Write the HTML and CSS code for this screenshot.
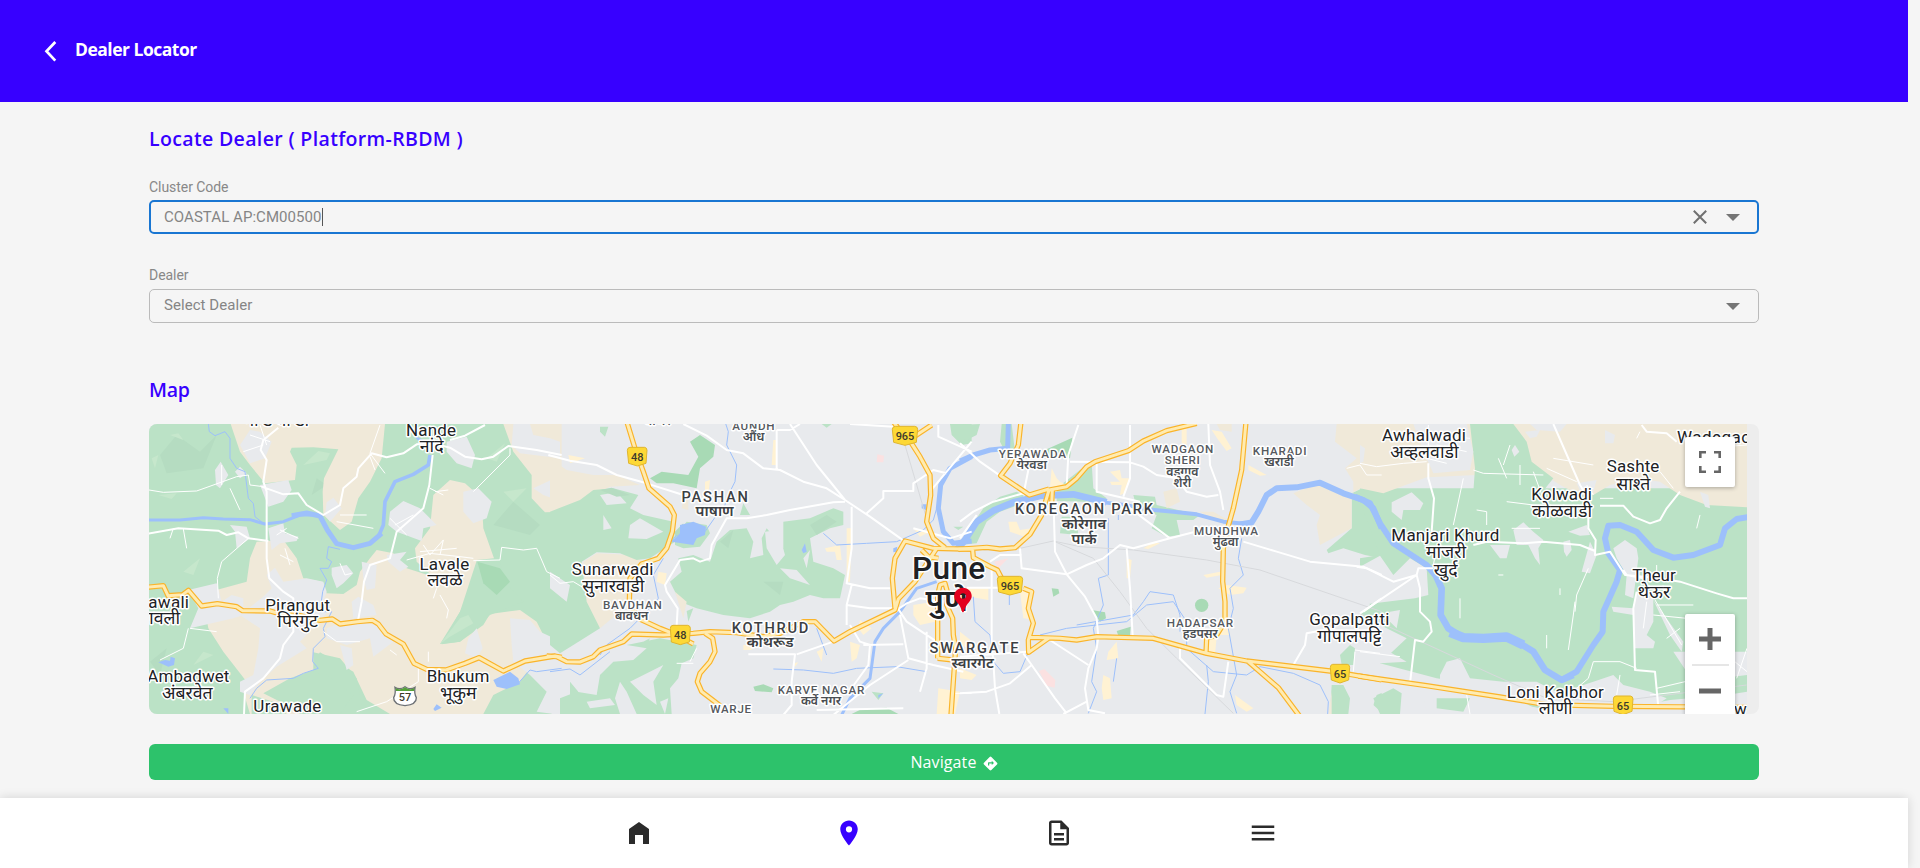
FILE: index.html
```html
<!DOCTYPE html>
<html lang="en">
<head>
<meta charset="utf-8">
<title>Dealer Locator</title>
<link rel="stylesheet" href="styles.css">
</head>
<body>
<div class="shell">
  <header class="topbar">
    <svg class="back" viewBox="0 0 12 21"><path d="M10.8 1 2 10.3 10.8 19.6"/></svg>
    <h1 class="topbar-title">Dealer Locator</h1>
  </header>

  <main class="content">
    <h2 class="heading heading-locate">Locate Dealer ( Platform-RBDM )</h2>

    <div class="field">
      <label class="label">Cluster Code</label>
      <div class="select focused">
        <span class="value">COASTAL AP:CM00500</span><span class="caret"></span>
        <svg class="clear" viewBox="0 0 14 14"><path d="M.8.8 13.2 13.2M13.2.8.8 13.2"/></svg>
        <svg class="arrow" viewBox="0 0 14 7"><path d="M0 0h14L7 7z"/></svg>
      </div>
    </div>
    <div class="field">
      <label class="label">Dealer</label>
      <div class="select">
        <span class="value">Select Dealer</span>
        <svg class="arrow" viewBox="0 0 14 7"><path d="M0 0h14L7 7z"/></svg>
      </div>
    </div>

    <h2 class="heading heading-map">Map</h2>

    <div class="map">
      <svg class="map-canvas" viewBox="149 424 1598 290">
        <defs>
          <g id="highways">
            <g transform="translate(140 415) scale(.33333)">
              <path d="M20 517 70 512 84 542 128 539 145 526 185 573 232 566 290 575 308 587 390 588 425 598 480 602 540 616 577 612 600 627 652 620 697 616 715 627 738 657 790 687 822 745 860 763 918 765 975 745 1017 728 1090 768 1155 738 1245 723 1265 727"/>
            </g>
            <g transform="translate(550 415) scale(.33333)">
              <path d="M-10 723 20 725 50 740 90 741 130 725 150 705 220 680 245 657 340 660 430 655 480 650 560 653 640 665 690 655 760 620 795 620 852 678 900 650 1035 585 1045 552 1095 500 1160 400"/>
              <path d="M232 25 258 110 280 170 297 220 360 275 373 300 367 350 350 400 325 430 275 447 240 490 238 560 265 610 330 640 380 660 430 687M465 655 488 670 495 710 480 740 450 775 442 800 455 830 510 872"/>
              <path d="M1035 580 1027 490 1035 430 1065 378 1150 400 1270 403M1030 20 1045 40M1075 70 1110 125 1140 180 1142 240 1130 320 1150 370 1185 398M1115 405 1135 425 1165 430M1145 30 1085 70M1163 730V540L1170 510 1185 505 1192 530 1190 570 1208 610 1210 660 1217 700 1203 900M1163 730 1210 735"/>
            </g>
            <g transform="translate(960 415) scale(.33333)">
              <path d="M-5 403 80 397 120 402 165 398 210 358 245 300 267 225 320 215 350 190 380 155 405 140 505 107 550 78 620 47 710 25M183 20 175 90 150 145 122 182 208 240 267 222M277 225 275 268M858 20 845 165 820 280 800 350 790 400 788 500 795 560 795 620 770 660 740 670 738 715M38 405 40 428 90 455 112 465 125 490M190 520 215 530 205 580 220 625 205 675 206 712 268 668M210 667 300 670 350 675 410 665 580 670 740 715 860 738 1110 768 1265 795M865 740 955 818 1020 905"/>
            </g>
            <g transform="translate(1360 415) scale(.33333)">
              <path d="M-5 783 200 812 420 846 560 869 760 874 1170 877"/>
            </g>
          </g>
        </defs>

        <rect class="urban" x="149" y="424" width="1598" height="290"/>

        <!-- western hills -->
        <g transform="translate(140 415) scale(.33333)">
          <path class="park" d="M27 27H1235V897H27z"/>
          <path class="hill-dark" d="M60 120 110 60 180 110 230 60 190 160 80 175zM1060 330 1120 260 1200 330 1170 360zM560 210 530 190 515 240zM30 740 80 700 60 780z"/>
          <path class="hill-light" d="M35 130 55 120 45 160zM90 60 130 75 115 55zM55 240 110 235 95 252zM130 470 180 430 160 480zM160 750 190 710 220 720zM490 150 535 108 570 115 560 135zM1040 130 1095 85 1070 140zM1090 230 1160 220 1120 260z"/>
          <path class="sand" d="M272 27H735L725 130 690 200 655 250 635 320 600 345 550 300 548 230 552 190 595 103 520 97 455 98 450 110 470 150 465 195 415 200 375 205 330 150 300 110zM1090 27H1265V290L1215 292 1175 250V180L1120 110z"/>
          <path class="sand" d="M350 380 430 375 470 430 490 490 545 500 560 535 610 537 650 510 660 470 690 430 710 405 760 415 800 460 880 485 830 440 825 400 870 340 880 240 930 195 975 205 1025 250 1030 340 1062 430 1010 435 1015 480 960 590 905 688 960 680 1030 630 1050 597 1140 585 1190 620 1215 670 1265 690V745L1165 765 1140 800 1060 840 1030 897H750L680 855 640 770 540 712 520 740 535 760 450 790 370 835 440 870 480 897H330L310 830 320 800 250 710 205 640 190 560 210 530 320 500 330 430z"/>
          <path class="park" d="M1010 437H1080L1095 500 1150 560 1050 600 960 680 900 687 960 590zM520 712 600 730 650 790 665 870 700 897H600L640 840 560 780 520 775z"/>
          <path class="forest" d="M1012 440 1080 460 1110 500 1070 540 1030 505z"/>
          <path class="hill-light" d="M900 687 960 610 985 600 1000 625 930 665z"/>
          <path class="park" d="M335 840 400 860 440 897H335z"/>
          <path class="urban" d="M300 90 330 45 360 50 395 80 375 130 330 145zM225 165 242 140 265 180 240 220 228 210zM285 170 300 155 320 175 300 190zM360 210 445 195 455 225 430 260 385 275zM560 262 580 248 605 280 570 320 555 300zM750 290 790 258 840 280 890 330 850 340 845 378 770 350 745 330zM920 80 980 65 1005 120 995 160 950 145 920 110zM970 230 1015 220 1055 260 1040 310 1000 325 970 290zM1120 27H1170L1180 60 1230 70 1260 80V130L1140 115 1115 90zM1180 220 1265 180V260L1210 240zM270 330 320 335 330 370 290 400 285 350zM385 340 430 325 435 355 475 365 470 378 420 385 395 405zM740 420 800 410 780 435 805 455 780 470 745 440zM665 440 710 450 705 520 680 525 670 490zM575 458 620 450 640 475 610 505 590 520 575 480zM380 480 405 458 430 500 500 490 550 500 560 530 545 570 560 595 480 680 500 700 410 755 360 800 330 840 300 830 300 800 340 780 355 700 360 640 300 600 370 545 395 520zM145 525 230 505 245 560 275 540 310 550 310 600 280 610 150 640 175 580zM560 640 640 610 730 640 760 680 700 725 690 670 620 690 560 670zM600 690 635 700 640 750 620 765zM635 560 655 545 700 570 710 600 640 610zM1110 610 1170 615 1200 650 1265 680V900L1190 890 1220 830 1170 780 1120 740 1115 690zM985 670 1010 640 1028 700 1010 730 975 715z"/>
        </g>
        <!-- Pashan and Kothrud -->
        <g transform="translate(550 415) scale(.33333)">
          <path class="sand" d="M0 130 50 165 130 180 200 180 270 210 180 215 90 260 40 290 0 290zM100 440 140 415 250 420 280 440 230 480 235 570 150 640 110 580z"/>
          <path class="park" d="M0 290 90 255 130 225 190 220 265 240 240 280 280 300 370 320 375 380 300 430 260 435 210 415 140 412 95 440 110 560 150 640 70 690 30 715 0 690z"/>
          <path class="urban" d="M150 240 200 232 230 265 170 270zM240 330 270 310 340 350 290 372 235 370zM160 300 185 340 160 345zM0 470 60 510 50 560 0 520z"/>
          <path class="park" d="M360 500 395 470 385 430 430 420 480 440 500 380 540 345 590 340 610 380 600 430 640 420 635 370 650 340 700 400 700 320 780 310 850 280 880 290 880 330 840 340 780 370 790 440 850 460 885 480 870 550 820 550 780 540 730 560 690 570 660 590 600 610 520 600 440 580 390 560zM375 360 410 320 470 330 480 355 450 395 400 400 375 390zM570 300 580 265 600 300zM1200 27H1265V85L1235 90 1205 60zM150 35 175 35 165 65 150 50zM1210 335H1240L1225 345zM410 588 430 580 415 620zM965 830 1000 835 985 855zM815 27H845L830 38z"/>
          <path class="forest" d="M300 190 335 170 415 180 445 125 420 80 450 60 495 90 490 125 450 160 440 220 370 205 320 205zM610 815 640 808 670 820 665 832 615 828zM905 897 935 882 1010 878 1045 897z"/>
          <path class="urban" d="M645 350 685 345 705 420 680 450 650 400zM760 430 780 405 770 460zM690 460 740 465 780 510 720 490z"/>
          <path class="park" d="M230 690 330 670 440 690 430 730 395 745 385 790 360 820 365 897H260L230 830 210 800 195 850 210 897H30L30 850 80 830 140 840 150 780 190 740 250 735 290 700zM260 690 300 670 290 690zM60 800 85 830 60 850z"/>
          <path class="urban" d="M240 800 340 750 310 800 320 870 280 840zM330 860 355 850 345 897zM110 860 180 850 195 870 120 880z"/>
          <path class="hill-dark" d="M510 380 550 345 535 400zM780 330 830 300 860 320 800 360zM640 500 700 500 690 540zM150 225 185 218 240 240 200 245zM370 355 400 325 390 370z"/>
          <path class="sand" d="M375 530 410 560 400 610zM400 250 415 250 415 285 395 280z"/>
          <path class="block" d="M325 470 350 475 345 510 320 500zM465 200 480 195 475 240 465 235zM825 400 870 390 875 435 860 435 855 410 830 410zM890 340 905 340 900 500 890 500zM930 615 965 640 940 660 925 640zM900 680 930 690 920 730 905 740zM1090 570 1150 560 1155 620 1110 630 1090 600zM1165 820 1230 830 1215 897H1160zM800 710 820 700 815 740zM670 75H680V150H665zM1090 340 1140 350 1110 365zM730 745 745 742 735 755zM580 690H605V705H580zM55 120 105 130 60 145z"/>
          <path class="hospital" d="M982 118 1002 122 1000 142 980 142z"/>
        </g>
        <!-- Koregaon Park to Hadapsar -->
        <g transform="translate(960 415) scale(.33333)">
          <path class="park" d="M0 30 60 27 50 60 20 75 0 70zM125 27H155L165 110 140 120 120 80zM30 340 70 280 120 245 170 230 190 240 190 265 120 290 80 320 50 385 0 390zM290 220 360 165 395 145 400 220 440 250 420 262 290 258zM305 305 350 305 355 360 300 355zM520 240 585 245 590 270 720 300 700 315 650 315 660 360 620 365 575 340 590 300 530 280zM1175 235 1210 218 1240 225 1265 250V430L1215 420 1150 400 1105 415 1100 405 1175 340zM1115 810 1150 810 1170 850 1165 897H1110zM1240 840 1265 830V890L1240 880zM1140 720 1170 690 1185 700 1180 750 1145 750z"/>
          <path class="forest" d="M255 105 337 68 330 130 270 125zM275 520 295 522 298 535 280 545zM395 585 435 592 438 610 420 620zM470 648 512 635 510 662 475 662z"/>
          <circle class="forest" cx="725" cy="571" r="20"/>
          <path class="sand" d="M1130 27H1265V225L1205 218 1175 235V340L1080 390 1070 330 1080 300 1040 270 1000 235 1075 205 1180 245 1180 200 1155 160 1190 130 1125 80zM610 230 650 220 660 260 620 280zM720 290 760 290 810 318 780 325zM770 27H815V50L780 45zM1115 830 1105 897 1115 897z"/>
          <path class="block" d="M275 160 290 190 300 200 320 210 270 215zM145 320 170 320 180 345 215 340 205 370 150 350zM450 170 480 165 485 190 510 190 495 235 480 240 485 210 455 210 450 200 480 200zM665 40 680 40 680 90 665 85zM755 45 785 50 815 100 800 108 775 75zM865 150 920 180 900 182 865 165zM20 520H85V555L30 545zM180 530 210 520 208 612 190 610zM730 480 780 470 785 480 740 488zM775 520 800 510 860 518 850 535 810 540zM550 400 580 382 600 385 565 402zM445 710 470 680 475 730 440 735zM0 650 50 690 40 705 0 690zM0 760 50 780 35 795 0 790zM430 780 450 790 455 850 430 855 425 820zM825 840 880 880 860 890 830 870zM500 430 515 435 510 490 500 490zM770 620H810V660H770zM730 670 770 665 765 720 735 715z"/>
          <path class="hospital" d="M102 440 145 430 115 460zM237 768 253 762 286 795 284 818 260 812z"/>
        </g>
        <!-- eastern farmland -->
        <g transform="translate(1360 415) scale(.33333)">
          <path class="park" d="M0 220H1161V830L1100 840 930 855 880 865 620 870 540 890 420 820 230 790 60 745 140 670 0 600 30 570 0 500 0 430 60 420 0 260z"/>
          <path class="sand" d="M0 27H330L345 90 350 180 200 187 70 235 0 220zM460 27H1161V277L1040 270 960 240 900 200 830 190 750 210 700 240 660 240 600 210 540 170 510 140 500 90z"/>
          <path class="park" d="M330 27H460L500 80 515 140 580 190 540 240 340 230 345 160z"/>
          <path class="urban" d="M160 27H320L340 110 330 165 220 175 195 120zM0 455 60 422 100 480 150 430 200 460 205 540 165 550 0 570zM0 90 15 100 10 140 0 145zM495 50 540 45 530 65 510 70zM510 27H620L600 50 530 45zM455 105 465 90 478 110 463 125zM735 45 765 60 760 85 735 85zM95 262 155 232 190 265 180 285 130 285 125 315 95 290zM460 345 490 322 520 350 550 375 535 400 540 450 525 430 505 390 470 390zM390 390 450 390 440 430 420 430zM610 380 630 375 635 405 620 425 612 410zM650 205 710 195 700 230 665 240zM625 350 680 330 690 360 660 362zM665 470 690 380 710 420 690 475zM760 400 795 375 830 400 835 430 820 550 795 540 800 480 770 430zM755 575 820 580 830 530 880 550 880 620 860 660 885 680 880 700 825 700 820 600 760 590zM880 555 970 680 965 710 930 660zM0 650 20 655 70 700 140 740 60 745 0 750zM240 780 260 740 300 730 330 790 430 800 530 800 590 830 640 820 700 800 760 780 790 810 870 830 920 850 880 877H570L420 850 240 800zM0 790 90 805 190 830 200 897H120L100 820 50 840 40 870 70 897H0zM220 830 400 850 540 880 640 890 620 897H220zM940 710H1161V780L1000 800zM90 590 120 585 110 640 90 620zM1020 230 1045 240 1050 280 1035 275z"/>
          <path class="park" d="M40 850 100 820 125 835 120 897H60zM230 850 330 850 310 890 230 880z"/>
        </g>

        <!-- rivers and lakes -->
        <g class="river" transform="translate(140 415) scale(.33333)">
          <path class="w7" d="M20 315 120 315 190 308 250 312 330 314 375 327 430 320 480 300 540 300"/>
          <path class="w14" d="M455 302 500 294 540 303 562 345 590 386 640 398 690 385 725 355"/>
          <path class="w9" d="M715 365 730 330 735 260 765 200 820 178 865 150 870 120"/>
          <path class="w3" d="M205 27 208 50 225 62 255 50 270 70 270 130 290 160 315 170 325 250 340 265 345 305 370 325M600 403 565 395 560 430 575 440 565 460 540 460 560 495 548 530 540 590 575 590 550 640 555 665 520 700 518 740 535 760 490 775 460 790 380 795 350 820 330 850M1265 760 1190 770 1170 765 1130 810"/>
          <path class="lake" d="M1060 795 1110 770 1135 790 1140 808 1100 822 1070 815zM75 735 90 737 92 725 105 730 102 750 85 755 55 742zM880 882 890 868 905 878 885 888zM250 880 265 880 265 897zM820 60 850 75 840 85z"/>
        </g>
        <g class="river" transform="translate(550 415) scale(.33333)">
          <path class="w3" d="M525 20 535 50 530 90 560 150 555 200 530 250 520 290M820 355 860 390 950 385 1040 380 1120 345 1150 315 1160 280M340 410 380 360M465 350 500 300M340 430 310 480 325 550 280 600 240 640 170 690 150 720M0 770 60 762 90 780 180 710M670 762 760 765 850 775 920 760 1040 755 1130 770M800 640 830 720"/>
          <path class="w7" d="M875 900 900 850 960 790 975 680 1000 640 1050 590 1100 520 1160 500"/>
          <path class="w14" d="M1265 125 1200 160 1172 210 1165 280 1180 350 1210 385 1265 378"/>
          <path class="lake" d="M390 330 430 320 468 335 465 360 440 370 430 390 365 380 390 355zM755 405 765 385 770 410 760 415zM1115 268 1130 268 1128 285 1115 280zM1030 400 1042 395 1040 410 1030 412zM985 840 1000 835 985 850z"/>
        </g>
        <g class="river" transform="translate(960 415) scale(.33333)">
          <path class="w14" d="M145 27 143 100 90 105 40 120 0 138"/>
          <path class="w20" d="M-10 405 15 375 50 320 100 287 160 262 240 243 340 238 410 255 440 262"/>
          <path class="w9" d="M430 262 500 270 570 285"/>
          <path class="w12" d="M560 283 640 290 710 298 790 320 870 328"/>
          <path class="w16" d="M840 328 875 322 895 290 920 240 950 220 1010 217 1080 203 1150 235 1210 255 1240 280 1265 340"/>
          <path class="w3" d="M445 310 445 480 415 490 430 570 400 640 410 700 395 800 410 830 385 895M845 370 835 430 850 480 810 520 820 580 805 640 830 780 810 830 830 895M240 660 320 640 500 620 560 570 640 560 680 620 680 700 760 770 860 780 900 755 1000 775 1080 810 1105 860 1103 897M350 630 520 600 550 560 570 530 640 540 660 600 660 650M40 545 45 620 90 660 100 740 130 775 180 770 210 700M475 300V315M148 540V570M470 730 460 800M740 750 745 800 735 897"/>
        </g>
        <g class="river" transform="translate(1360 415) scale(.33333)">
          <path class="w16" d="M-15 245 30 265 60 325 100 385 200 450 225 480"/>
          <path class="w20" d="M222 470 245 520 242 600 265 640 310 668"/>
          <path class="w28" d="M270 652 310 668 370 670 440 666 490 690"/>
          <path class="w20" d="M480 685 520 710 555 765 605 795 640 780"/>
          <path class="w16" d="M605 795 650 770 700 690 728 650 730 590 770 500 780 465 745 415 735 370 745 332 780 330 830 350 880 405 940 428 1000 420 1080 390 1095 340 1130 312 1170 305"/>
        </g>

        <!-- railways -->
        <g class="rail">
          <path transform="translate(550 415) scale(.33333)" d="M1065 90 1150 380"/>
          <path transform="translate(960 415) scale(.33333)" d="M70 405 180 400 280 378 360 395 520 405 740 435 900 465 1265 590M280 378 400 430 480 530 560 640 650 730 820 895"/>
          <path transform="translate(1360 415) scale(.33333)" d="M0 595 140 660 400 780 560 850 760 860 1160 810"/>
        </g>

        <!-- local roads -->
        <g class="road" transform="translate(140 415) scale(.33333)">
          <path class="r5" d="M415 38 370 75 362 105 380 135 370 200 380 230 380 430 388 490 430 530 460 550 460 650 430 690 420 730 370 790 315 830 312 897M20 357 115 340 235 347 260 360 295 352 325 370 385 378M365 215 430 238 475 235 500 270 550 300 600 270 610 220 650 185 655 160 695 115 740 127 790 115 830 88 880 85 930 98 975 125 1025 133 1060 125 1105 93 1190 105 1265 120M930 75 975 62 1035 30M878 120 868 210 850 280 770 350 750 430 690 450 672 500 665 560 655 612"/>
          <path class="r2" d="M27 225 70 232 170 228 290 185 325 180 330 210 370 215M720 30 690 115 735 175M690 125 705 165M245 150 245 210M270 220 300 285M325 370 245 440 232 490 235 550M130 342 140 400M100 340 90 370M1000 230 1110 120 1110 100M870 220 910 240M885 230 925 225M1000 437 1080 435 1085 397 1150 405 1190 400 1220 470 1260 490M800 435 870 415 960 425 1000 430M850 390 870 420 910 375 900 420M840 410 950 400M145 640 130 700 60 735M150 640 230 650M550 650 590 680 660 680M600 300H680M590 320 700 340M435 400 450 450M420 420 460 440M600 445 615 480 635 475M900 540 925 585 920 610M890 520 880 550M865 710V740M750 705 770 720M835 760V800L740 860 650 890M420 345 475 370M410 360 440 340M750 310 800 360M765 330 820 300M330 60 390 80M310 110 370 90M360 30 380 90"/>
        </g>
        <g class="road" transform="translate(550 415) scale(.33333)">
          <path class="r5" d="M-5 120 60 137 140 150 200 180 290 205 400 240M400 27 470 62 530 105 580 115 640 160 690 165 760 200 830 220 885 255M720 27 800 150 885 255 960 305 1065 380M380 630 383 580 350 530 345 510 390 435 430 430 450 440 480 430 485 390 530 310 590 310 650 300 720 285 850 262 885 260M905 275V400L890 505 960 520 1020 520M905 510 890 570 890 630M890 570 960 580 1035 580M1040 575 1070 620 1160 680M1050 600 1075 730 1150 750 1240 770M595 718H735L725 800V870L700 900M740 718 850 680M850 900 960 810 1075 735M1040 585 1070 565 1110 550 1180 560M950 295 1000 250V228H1090V205L1150 165 1190 175M1165 30V65L1265 110M1265 80 1140 230M680 45 680 165M680 45H720L750 27M900 630 930 680 960 690 955 750 890 840M940 690 1060 688M1130 650V760L1110 830M900 27 1030 35M1090 340 1200 370 1265 350M800 885 1060 880"/>
          <path class="r2" d="M0 480 30 505 70 500 120 530M420 740 440 700M380 745H430M1210 835H1265"/>
        </g>
        <g class="road" transform="translate(960 415) scale(.33333)">
          <path class="r5" d="M0 85 60 140 120 182M355 30 325 120 320 210M510 30V190L490 245M330 140 510 142 550 155 590 180 650 190 680 230 740 245 775 240M745 27 750 150 780 230 790 285M410 145V230L540 260M190 235 100 260 40 290 0 320M190 240 205 165M0 370 50 300M490 265 630 370 700 352M280 240 285 410 320 478 375 545 410 610 415 665 410 700 385 760 375 820 385 885 435 895M180 400 185 460 320 478 380 450 430 430 480 390 520 400 630 370M500 400 510 520 518 662M95 455 95 680 100 740 105 820 118 897M20 518H120M185 420 120 420 90 440M190 715 215 750 285 850 320 895M380 860 310 897M0 835 80 830 150 805 215 750M265 672 385 750M660 690V730L770 840 790 845 805 740M850 380 950 410 1050 440 1210 455 1265 480M1265 550 1210 590M1000 750 1035 690 1040 655 1120 640M0 725 200 710"/>
          <path class="r2" d="M1160 160 1200 150 1220 180 1265 180M1185 710 1180 770M1185 705 1260 715"/>
        </g>
        <g class="road" transform="translate(1360 415) scale(.33333)">
          <path class="r5" d="M580 27 660 210 685 250V340L707 375 705 420 750 410 795 480 900 490 960 500 1070 535 1120 550H1161M-10 455 20 460 100 500 170 480 175 460 220 460M0 595 170 480 180 520 180 590 210 620 215 650 190 680 165 675 150 805M205 145V190L222 250 215 350M340 390 380 380 490 385 550 380 660 390 705 408M720 272H790L820 305 870 325 900 315 920 280 960 230M845 30 860 50 920 55 950 80M830 530 820 580 825 765 885 770 895 877M790 465 800 480 850 490"/>
          <path class="r2" d="M0 145 50 155 130 145 200 140M205 30V130M225 60 330 70M180 125 260 145M230 90 320 110M340 165 370 175 550 180M480 150V210M415 130 440 190M450 90 430 150M520 170 560 280M560 160 650 200M700 150 580 130M310 190 280 330M350 285 380 290V330M230 400 220 450M300 550V610M415 480H430M645 560 640 600 625 705M685 460 650 540 645 590M600 520V540M560 660V700M885 555 965 690M860 560 850 640M890 570H1000M880 600 980 610M700 740 685 790 650 820M700 740 780 740 830 760M780 780 770 840M320 840 330 897M0 710 120 725M960 640 920 670M890 820 975 800M870 840 960 830M720 250H760M860 470V500M890 450V480M440 260 520 270 680 275M455 340H540M900 170 940 220M1020 300 1010 340M680 210 700 240M670 220H700M640 230 700 235M1161 700 1130 790M1090 95 1161 90M840 50 830 70M1100 720 1161 770"/>
        </g>

        <use href="#highways" class="hw-case"/>
        <use href="#highways" class="hw-fill"/>

        <!-- route shields -->
        <g class="shield" transform="translate(140 415) scale(.33333)">
          <path class="us" d="M765 817Q780 826 795 815 810 826 825 817 822 835 829 848 830 868 795 872 760 868 761 848 768 835 765 817z"/>
          <path class="us-top" d="M767 819Q780 828 795 817 810 828 823 819L822 828H768z"/>
          <text class="num" x="795" y="857">57</text>
        </g>
        <g class="shield" transform="translate(550 415) scale(.33333)">
          <path class="nh" d="M240 97H284Q291 98 291 106L288 145 262 153 236 145 232 106Q232 98 240 97z"/><text class="num" x="262" y="138">48</text>
          <path class="nh" d="M369 631H413Q421 632 421 640L418 681 391 689 364 681 361 640Q361 632 369 631z"/><text class="num" x="391" y="672">48</text>
          <path class="nh" d="M1036 34H1094Q1103 35 1103 43L1099 82 1065 91 1031 82 1027 43Q1027 35 1036 34z"/><text class="num" x="1065" y="75">965</text>
        </g>
        <g class="shield" transform="translate(960 415) scale(.33333)">
          <path class="nh" d="M121 484H179Q188 485 188 493L184 531 150 540 116 531 112 493Q112 485 121 484z"/><text class="num" x="150" y="525">965</text>
          <path class="nh" d="M1118 748H1162Q1169 749 1169 757L1166 795 1140 804 1114 795 1111 757Q1111 749 1118 748z"/><text class="num" x="1140" y="789">65</text>
        </g>
        <g class="shield" transform="translate(1360 415) scale(.33333)">
          <path class="nh" d="M768 843H811Q819 844 819 852L816 889 789 899 762 889 760 852Q760 844 768 843z"/><text class="num" x="789" y="886">65</text>
        </g>

        <!-- place names -->
        <g class="names" transform="translate(140 415) scale(.33333)">
          <text class="hi" x="410" y="34" textLength="195">गाडेवाडी</text>
          <text class="town" x="873" y="64" textLength="150">Nande</text><text class="hi" x="875" y="112">नांदे</text>
          <text class="town" x="913" y="465" textLength="149">Lavale</text><text class="hi" x="915" y="513">लवळे</text>
          <text class="town" x="473" y="587" textLength="195">Pirangut</text><text class="hi" x="473" y="635">पिरंगुट</text>
          <text class="town" x="86" y="579" textLength="122">awali</text><text class="hi" x="66" y="628">गवली</text>
          <text class="town" x="145" y="801" textLength="246">Ambadwet</text><text class="hi" x="142" y="851">अंबरवेत</text>
          <text class="town" x="442" y="892" textLength="204">Urawade</text>
          <text class="town" x="954" y="801" textLength="188">Bhukum</text><text class="hi" x="955" y="852">भूकुम</text>
        </g>
        <g class="names" transform="translate(550 415) scale(.33333)">
          <text class="hi sm" x="323" y="31">बाणेर</text>
          <text class="area s" x="610" y="46" textLength="127">AUNDH</text><text class="hi sm" x="611" y="78">औंध</text>
          <text class="area l" x="494" y="260" textLength="199">PASHAN</text><text class="hi md" x="494" y="303">पाषाण</text>
          <text class="town" x="188" y="480" textLength="245">Sunarwadi</text><text class="hi" x="190" y="531">सुनारवाडी</text>
          <text class="area s" x="247" y="583" textLength="176">BAVDHAN</text><text class="hi sm" x="245" y="616">बावधन</text>
          <text class="area l" x="660" y="654" textLength="230">KOTHRUD</text><text class="hi md" x="660" y="697">कोथरूड</text>
          <text class="area s" x="813" y="837" textLength="260">KARVE NAGAR</text><text class="hi sm" x="813" y="869">कर्वे नगर</text>
          <text class="area s" x="542" y="894" textLength="123">WARJE</text>
          <text class="city" x="1196" y="492" textLength="220">Pune</text><text class="hi big" x="1190" y="588">पुणे</text>
        </g>
        <g class="names" transform="translate(960 415) scale(.33333)">
          <text class="area s" x="217" y="130" textLength="202">YERAWADA</text><text class="hi sm" x="215" y="163">येरवडा</text>
          <text class="area s" x="667" y="115" textLength="185">WADGAON</text><text class="area s" x="667" y="148" textLength="105">SHERI</text>
          <text class="hi sm" x="667" y="182">वडगाव</text><text class="hi sm" x="667" y="215">शेरी</text>
          <text class="area s" x="959" y="119" textLength="161">KHARADI</text><text class="hi sm" x="957" y="152">खराडी</text>
          <text class="area l" x="372" y="297" textLength="414">KOREGAON PARK</text><text class="hi md" x="372" y="341">कोरेगाव</text><text class="hi md" x="372" y="387">पार्क</text>
          <text class="area s" x="798" y="359" textLength="192">MUNDHWA</text><text class="hi sm" x="797" y="392">मुंढवा</text>
          <text class="area s" x="720" y="636" textLength="199">HADAPSAR</text><text class="hi sm" x="721" y="669">हडपसर</text>
          <text class="area l" x="42" y="715" textLength="267">SWARGATE</text><text class="hi md" x="38" y="759">स्वारगेट</text>
          <text class="town" x="1168" y="630" textLength="240">Gopalpatti</text><text class="hi" x="1168" y="681">गोपालपट्टि</text>
        </g>
        <g class="names" transform="translate(1360 415) scale(.33333)">
          <text class="town" x="192" y="79" textLength="252">Awhalwadi</text><text class="hi" x="193" y="130">अव्हलवाडी</text>
          <text class="town" x="605" y="255" textLength="182">Kolwadi</text><text class="hi" x="606" y="305">कोळवाडी</text>
          <text class="town" x="819" y="172" textLength="158">Sashte</text><text class="hi" x="820" y="224">साश्ते</text>
          <text class="town" x="1062" y="84" textLength="222">Wadegao</text>
          <text class="town" x="256" y="378" textLength="324">Manjari Khurd</text><text class="hi" x="258" y="430">मांजरी</text><text class="hi" x="257" y="483">खुर्द</text>
          <text class="town" x="882" y="498" textLength="130">Theur</text><text class="hi" x="882" y="549">थेऊर</text>
          <text class="town" x="586" y="849" textLength="291">Loni Kalbhor</text><text class="hi" x="587" y="898">लोणी</text>
          <text class="town" x="1141" y="899">w</text>
        </g>

        <path class="marker" fill-rule="evenodd" d="M963 587.700c-4.900 0-8.700 3.600-8.700 8.300 0 4.100 3.500 6.600 5.500 9.900 1.400 2.200 2.200 6.400 3.200 6.400s1.800-4.200 3.200-6.400c2-3.300 5.500-5.800 5.500-9.900 0-4.700-3.800-8.300-8.700-8.300zm0 5.500a2.800 2.800 0 1 1 0 5.600 2.800 2.800 0 0 1 0-5.600z"/>
      </svg>

      <div class="control fullscreen">
        <svg viewBox="0 0 22 22"><path d="M1.300 7V1.300H7M15 1.300H20.700V7M20.700 15V20.700H15M7 20.700H1.300V15"/></svg>
      </div>
      <div class="control zoom">
        <svg viewBox="0 0 22 22"><path class="thick" d="M11 0V22M0 11H22"/></svg>
        <span class="rule"></span>
        <svg viewBox="0 0 22 22"><path class="thick" d="M0 11H22"/></svg>
      </div>
    </div>

    <button class="navigate">
      <span class="navigate-text">Navigate</span>
      <svg viewBox="0 0 24 24"><path d="m22.400 10.600-9-9a2 2 0 0 0-2.800 0l-9 9a2 2 0 0 0 0 2.800l9 9a2 2 0 0 0 2.800 0l9-9a2 2 0 0 0 0-2.800zM14 14.500V12h-4v3H8v-4c0-.6.4-1 1-1h5V7.500l3.500 3.500z"/></svg>
    </button>
  </main>

  <nav class="bottom">
    <svg class="tab" viewBox="0 0 30 30"><path d="M5 11 15 4 25 11V26H19V17H11V26H5z"/></svg>
    <svg class="tab active" viewBox="0 0 24 24"><path d="M12 2C8.130 2 5 5.130 5 9c0 5.250 7 13 7 13s7-7.750 7-13c0-3.870-3.130-7-7-7zm0 9.500a2.500 2.500 0 0 1 0-5 2.500 2.500 0 0 1 0 5z"/></svg>
    <svg class="tab" viewBox="0 0 24 24"><path d="M8 16h8v2H8zm0-4h8v2H8zm6-10H6c-1.100 0-2 .9-2 2v16c0 1.100.89 2 1.990 2H18c1.100 0 2-.9 2-2V8l-6-6zm4 18H6V4h7v5h5v11z"/></svg>
    <svg class="tab" viewBox="0 0 24 24"><path d="M3 18h18v-2H3v2zm0-5h18v-2H3v2zm0-7v2h18V6H3z"/></svg>
  </nav>
</div>
</body>
</html>
```
FILE: styles.css
```css
* { box-sizing: border-box; }
body {
  margin: 0;
  height: 868px;
  overflow: hidden;
  background: #f5f5f5;
  font-family: Roboto, "Noto Sans", sans-serif;
}
svg { display: block; flex: none; }
.shell { width: 1908px; height: 868px; display: flex; flex-direction: column; }

.topbar {
  height: 102px;
  flex: none;
  display: flex;
  align-items: center;
  gap: 18px;
  padding-left: 44px;
  background: #3700ff;
  color: #fff;
}
.back { width: 13px; height: 21px; }
.back path { fill: none; stroke: #fff; stroke-width: 2.700; }
.topbar-title {
  margin: 0 0 4px;
  font: 700 17.500px/24px "Open Sans", sans-serif;
  letter-spacing: -0.500px;
}

.content {
  flex: 1;
  display: flex;
  flex-direction: column;
  width: 1610px;
  margin: 0 auto;
}
.heading { margin: 0; color: #3700ff; font: 600 19.500px/28px "Open Sans", sans-serif; }
.heading-locate { margin-top: 23px; letter-spacing: .35px; }
.heading-map { margin: 53px 0 20px; letter-spacing: -.3px; }

.field { display: flex; flex-direction: column; }
.heading + .field { margin-top: 26px; height: 88px; }
.label { color: #888; font-size: 14px; line-height: 16px; margin-bottom: 5px; letter-spacing: -.05px; }
.select {
  height: 34px;
  display: flex;
  align-items: center;
  padding: 0 18px 2px 14px;
  border: 1px solid #bbb;
  border-radius: 5px;
  color: #858585;
  font-size: 15px;
  letter-spacing: .06px;
}
.select:not(.focused) { margin-top: 1px; }
.select.focused { border: 2px solid #1976d2; padding: 0 17px 1px 13px; }
.caret { width: 1px; height: 18px; background: #555; }
.clear { width: 14px; height: 14px; margin-left: auto; margin-right: 19px; }
.clear path { fill: none; stroke: #707070; stroke-width: 2; }
.arrow { width: 14px; height: 7px; fill: #757575; margin-top: 2px; }
.value + .arrow { margin-left: auto; }

.map {
  position: relative;
  height: 290px;
  flex: none;
  overflow: hidden;
  border-radius: 8px;
  background: #ededed;
}
.map-canvas { width: 1598px; height: 290px; }
.urban { fill: #e8eaed; }
.park { fill: #bbe2c6; }
.forest { fill: #a8dab5; }
.sand { fill: #f0e9d9; }
.block { fill: #fff2d3; }
.hospital { fill: #fbe1e1; }
.hill-dark { fill: #b5dcc1; }
.hill-light { fill: #c6e7cc; }
.river path { fill: none; stroke: #9dc0fb; stroke-linejoin: round; }
.river .lake { fill: #9dc0fb; stroke: none; }
.w3 { stroke-width: 3; }
.w7 { stroke-width: 9; }
.w9 { stroke-width: 11; }
.w12 { stroke-width: 12; }
.w14 { stroke-width: 15; }
.w16 { stroke-width: 18; }
.w20 { stroke-width: 20; }
.w28 { stroke-width: 28; }
.rail { fill: none; stroke: #d7d9dc; stroke-width: 3; }
.road { fill: none; stroke: #fff; stroke-linejoin: round; }
.r5 { stroke-width: 6; }
.r2 { stroke-width: 3; }
.hw-case, .hw-fill { fill: none; stroke-linejoin: round; }
.hw-case { stroke: #fab42a; stroke-width: 16; }
.hw-fill { stroke: #ffebb0; stroke-width: 9; }

.nh { fill: #fdd835; stroke: #dfb52e; stroke-width: 3; }
.us { fill: #fff; stroke: #6e7276; stroke-width: 4; }
.us-top { fill: #55a03a; }
.num { font: 500 33px Roboto, sans-serif; fill: #3c3a2c; text-anchor: middle; }
.names text {
  text-anchor: middle;
  paint-order: stroke;
  stroke: #fff;
  stroke-width: 9;
  stroke-linejoin: round;
  fill: #202124;
}
.names .town { font-size: 51px; }
.names .hi { font-size: 53px; font-family: Roboto, "Noto Sans Devanagari", "Noto Sans", sans-serif; }
.names .md { font-size: 45px; font-weight: 600; fill: #3c4043; }
.names .sm { font-size: 37px; font-weight: 600; fill: #4a4e52; }
.names .big { font-size: 93px; font-weight: 600; fill: #202124; }
.names .area { font-weight: 500; fill: #55595e; }
.names .s { font-size: 35px; }
.names .l { font-size: 44px; fill: #3c4043; }
.names .city { font-size: 95px; font-weight: 500; }
.marker { fill: #e3001f; }

.control {
  position: absolute;
  right: 24px;
  width: 50px;
  display: flex;
  flex-direction: column;
  align-items: center;
  background: #fff;
  border-radius: 2px;
  box-shadow: 0 1px 4px rgba(0, 0, 0, .3);
}
.control svg { width: 22px; height: 22px; margin: 14px 0; }
.control path { fill: none; stroke: #666; stroke-width: 2.600; }
.control .thick { stroke-width: 5; }
.fullscreen { top: 13px; height: 50px; }
.zoom { top: 190px; height: 102px; }
.rule { width: 37px; height: 2px; background: #e6e6e6; flex: none; }

.navigate {
  height: 36px;
  margin-top: 30px;
  display: flex;
  align-items: center;
  justify-content: center;
  gap: 6px;
  padding: 0;
  border: 0;
  border-radius: 6px;
  background: #2dc26b;
  color: #fff;
}
.navigate-text { font: 400 16px/24px "Open Sans", sans-serif; letter-spacing: .1px; }
.navigate svg { width: 15px; height: 15px; fill: #fff; margin-top: 3px; }

.bottom {
  height: 70px;
  flex: none;
  display: grid;
  grid-template-columns: 210px 210px 204px 30px;
  align-items: center;
  padding-left: 624px;
  background: #fff;
  box-shadow: 0 0 10px rgba(0, 0, 0, .14);
}
.tab { width: 30px; height: 30px; fill: #2b2b2b; }
.tab.active { fill: #3700ff; }
```
